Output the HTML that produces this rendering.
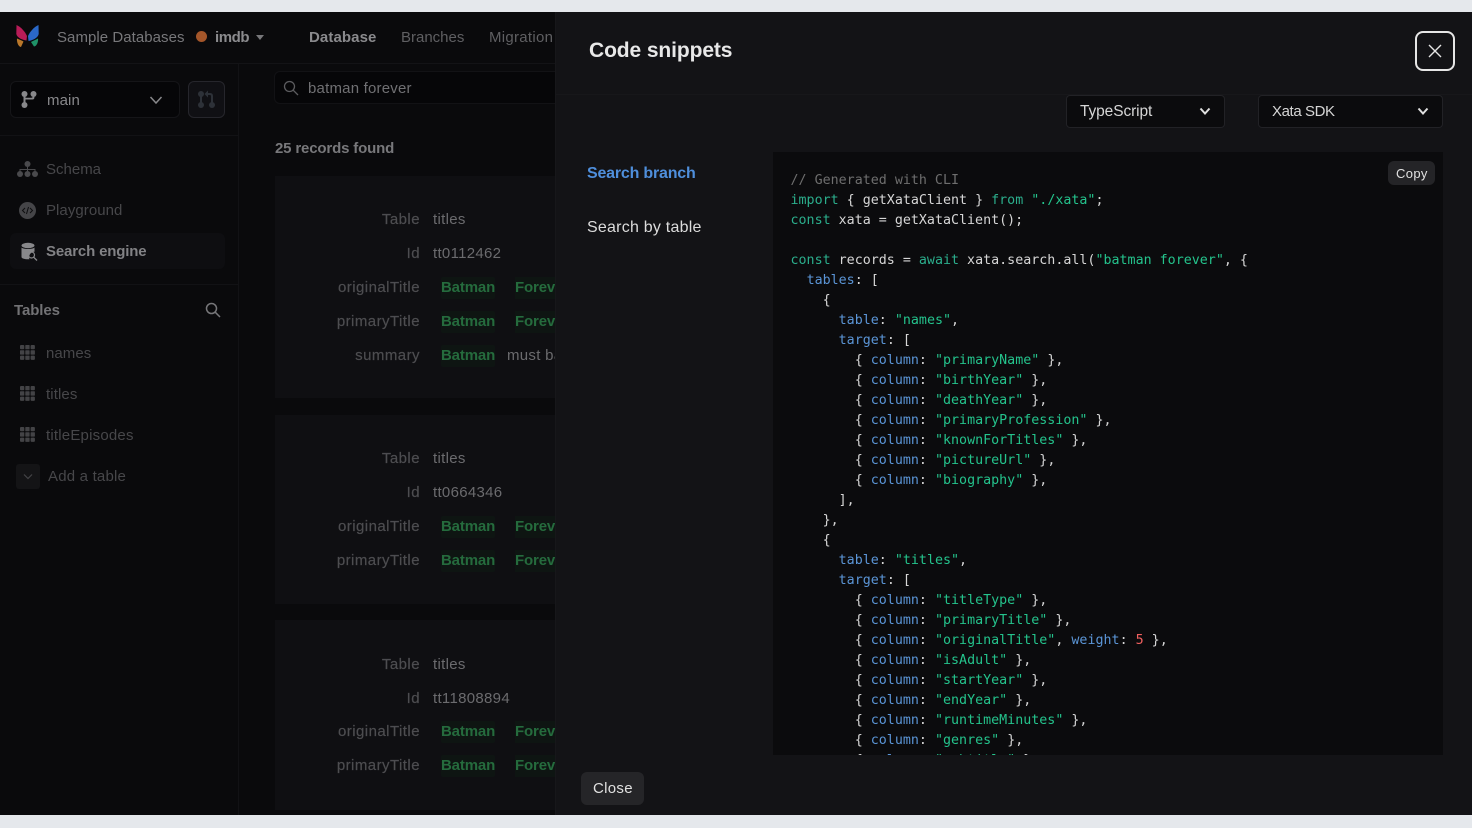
<!DOCTYPE html>
<html><head><meta charset="utf-8"><style>
*{box-sizing:border-box}
html,body{margin:0;padding:0;width:1472px;height:828px;overflow:hidden;background:#e5e8ec;font-family:"Liberation Sans",sans-serif}
.a{position:absolute;white-space:nowrap}
.t{position:absolute;white-space:nowrap;line-height:20px;font-size:15px;letter-spacing:.2px;margin-top:1px}
.l{position:absolute;white-space:nowrap;line-height:20px;font-size:15px;letter-spacing:.45px;right:1052px;color:#4d4d50;font-weight:500;text-align:right;margin-top:1px;-webkit-text-stroke:.2px #4d4d50}
.v{position:absolute;left:433px;white-space:nowrap;line-height:20px;font-size:15px;letter-spacing:.3px;color:#6b6b6e;margin-top:1px}
.h{position:absolute;white-space:nowrap;height:22px;line-height:22px;font-size:15px;letter-spacing:-.15px;font-weight:bold;color:#256b3d;background:#0e1512;width:54px;border-radius:2px;margin-top:1px}
.h2{position:absolute;white-space:nowrap;height:22px;line-height:22px;font-size:15px;letter-spacing:-.15px;font-weight:bold;color:#256b3d;background:#0e1512;padding:0;width:60px;margin-top:1px}
.card{position:absolute;left:275px;width:290px;background:#0f0f12}
pre{margin:0;font-family:"DejaVu Sans Mono","Liberation Mono",monospace;font-size:13.33px;line-height:20px;color:#d6d6d6;white-space:pre}
.k{color:#2bae8c}.s{color:#24c38c}.p{color:#5b95d6}.c{color:#6e6e6e}.n{color:#f0605f}
</style></head><body>
<div class="a" style="left:0;top:12px;width:1472px;height:803px;background:#0a0a0c;overflow:hidden"></div>

<!-- top bar -->
<svg class="a" style="left:15px;top:24px" width="25" height="25" viewBox="0 0 25 25">
<path d="M1.500 1C6 3 10 7.500 12 12L11.500 16.500C8 16 2 14 1.300 10Z" fill="#b81c58"/>
<path d="M23.500 1C19 3 15 7.500 13 12L13.500 17C17 16.500 23 14 23.700 10Z" fill="#2a68c8"/>
<path d="M2 14.500C4 15.500 7 16.500 8.500 17.500L6 23C3.500 23 1.500 18 2 14.500Z" fill="#b9772a"/>
<path d="M23 14.500C21 15.500 18 17 16 18L19 22.500C21.500 22.500 23.500 18 23 14.500Z" fill="#1f9268"/>
</svg>
<div class="t" style="left:57px;top:27px;color:#77777a;letter-spacing:.05px">Sample Databases</div>
<div class="a" style="left:196px;top:31px;width:11px;height:11px;border-radius:50%;background:#a4562a"></div>
<div class="t" style="left:215px;top:27px;color:#8b8b8e;font-weight:bold;letter-spacing:-.45px">imdb</div>
<div class="a" style="left:256px;top:35px;width:0;height:0;border-left:4px solid transparent;border-right:4px solid transparent;border-top:5px solid #77777a"></div>
<div class="t" style="left:309px;top:27px;color:#8a8a8d;font-weight:bold;letter-spacing:.1px">Database</div>
<div class="t" style="left:401px;top:27px;color:#5f5f62;letter-spacing:0">Branches</div>
<div class="t" style="left:489px;top:27px;color:#5f5f62;letter-spacing:.28px">Migration</div>
<div class="a" style="left:0;top:63px;width:556px;height:1px;background:#131316"></div>

<!-- sidebar -->
<div class="a" style="left:238px;top:64px;width:1px;height:751px;background:#121215"></div>
<div class="a" style="left:0;top:135px;width:238px;height:1px;background:#121215"></div>
<div class="a" style="left:0;top:284px;width:238px;height:1px;background:#121215"></div>
<div class="a" style="left:10px;top:81px;width:170px;height:37px;border-radius:6px;background:#060608;border:1px solid #151518"></div>
<svg class="a" style="left:20px;top:90px" width="18" height="19" viewBox="0 0 18 19" fill="#88888b"><circle cx="4.500" cy="4" r="3"/><circle cx="13.500" cy="4" r="3"/><circle cx="4.500" cy="15" r="3"/><path d="M3.500 4h2v11h-2z"/><path d="M12.600 4h1.800v3.500q0 2-2 2H5v-1.800h6.500q1.100 0 1.100-1z"/></svg>
<div class="t" style="left:47px;top:90px;color:#88888b;letter-spacing:.1px">main</div>
<svg class="a" style="left:149px;top:95px" width="14" height="10" viewBox="0 0 14 10" fill="none" stroke="#88888b" stroke-width="1.500"><path d="M1.500 2L7 8l5.500-6"/></svg>
<div class="a" style="left:188px;top:81px;width:37px;height:37px;border-radius:6px;background:#101014;border:1px solid #26262c"></div>
<svg class="a" style="left:197px;top:90px" width="19" height="19" viewBox="0 0 19 19" fill="#2d3138"><circle cx="4" cy="4" r="3"/><circle cx="4" cy="15" r="3"/><circle cx="15" cy="15" r="3"/><path d="M3 4h2v11H3z"/><path d="M14 8h2v7h-2zM9 3h4q3 0 3 3v3h-2V6q0-1-1-1H9z"/><path d="M11 .5v7L7.500 4z"/></svg>

<svg class="a" style="left:17px;top:160px" width="21" height="18" viewBox="0 0 21 18" fill="#4a4a4d"><circle cx="10.500" cy="4" r="3"/><circle cx="3" cy="14" r="3"/><circle cx="10.500" cy="14" r="3"/><circle cx="18" cy="14" r="3"/><path d="M10 6h1v3h7.500v3h-1v-2H11v2h-1v-2H3.500v2h-1V9H10z"/></svg>
<div class="t" style="left:46px;top:159px;color:#47474a;letter-spacing:0">Schema</div>
<div class="a" style="left:19px;top:202px;width:17px;height:17px;border-radius:50%;background:#454548"></div>
<svg class="a" style="left:19px;top:202px" width="17" height="17" viewBox="0 0 17 17" fill="none" stroke="#0e0e10" stroke-width="1"><path d="M6 6L3.500 8.500 6 11M11 6l2.500 2.500L11 11M9.500 5l-2 7"/></svg>
<div class="t" style="left:46px;top:200px;color:#47474a;letter-spacing:.05px">Playground</div>
<div class="a" style="left:10px;top:233px;width:215px;height:36px;border-radius:6px;background:#0e0e11"></div>
<svg class="a" style="left:20px;top:242px" width="18" height="20" viewBox="0 0 18 20"><ellipse cx="8" cy="3.500" rx="6.500" ry="2.700" fill="#88888b"/><path d="M1.500 5.500C3 7.500 13 7.500 14.500 5.500v4.200a5.500 5.500 0 0 0-5 7.500c-4 .4-8-.6-8-2.200z" fill="#88888b"/><circle cx="11.500" cy="13" r="3" fill="none" stroke="#88888b" stroke-width="1.200"/><path d="M13.800 15.300L17 18.500" stroke="#88888b" stroke-width="1.300"/></svg>
<div class="t" style="left:46px;top:241px;color:#828285;font-weight:bold;letter-spacing:-.16px">Search engine</div>
<div class="t" style="left:14px;top:300px;color:#727275;font-weight:bold;letter-spacing:-.1px">Tables</div>
<svg class="a" style="left:204px;top:301px" width="18" height="18" viewBox="0 0 18 18" fill="none" stroke="#77777a" stroke-width="1.500"><circle cx="7.500" cy="7.500" r="5"/><path d="M11.200 11.200L16 16"/></svg>

<svg width="0" height="0" style="position:absolute"><defs><g id="g" fill="#434346"><rect x="0" y="0" width="4.300" height="4.300" rx="1"/><rect x="5.300" y="0" width="4.300" height="4.300" rx=".6"/><rect x="10.600" y="0" width="4.300" height="4.300" rx="1"/><rect x="0" y="5.300" width="4.300" height="4.300" rx=".6"/><rect x="5.300" y="5.300" width="4.300" height="4.300" rx=".6"/><rect x="10.600" y="5.300" width="4.300" height="4.300" rx=".6"/><rect x="0" y="10.600" width="4.300" height="4.300" rx="1"/><rect x="5.300" y="10.600" width="4.300" height="4.300" rx=".6"/><rect x="10.600" y="10.600" width="4.300" height="4.300" rx="1"/></g></defs></svg>
<svg class="a" style="left:20px;top:345px" width="15" height="15"><use href="#g"/></svg>
<div class="t" style="left:46px;top:343px;color:#47474a;letter-spacing:.05px">names</div>
<svg class="a" style="left:20px;top:386px" width="15" height="15"><use href="#g"/></svg>
<div class="t" style="left:46px;top:384px;color:#47474a;letter-spacing:.1px">titles</div>
<svg class="a" style="left:20px;top:427px" width="15" height="15"><use href="#g"/></svg>
<div class="t" style="left:46px;top:425px;color:#47474a;letter-spacing:.2px">titleEpisodes</div>
<div class="a" style="left:16px;top:464px;width:24px;height:25px;border-radius:3px;background:#141416"></div>
<svg class="a" style="left:22px;top:473px" width="12" height="8" viewBox="0 0 12 8" fill="none" stroke="#444447" stroke-width="1.200"><path d="M2 1.500L6 5.500l4-4"/></svg>
<div class="t" style="left:48px;top:466px;color:#47474a;letter-spacing:.2px">Add a table</div>

<!-- main -->
<div class="a" style="left:274px;top:71px;width:290px;height:33px;border-radius:6px;background:#060608;border:1px solid #121215"></div>
<svg class="a" style="left:283px;top:80px" width="16" height="16" viewBox="0 0 16 16" fill="none" stroke="#5c5c5f" stroke-width="1.300"><circle cx="6.500" cy="6.500" r="5"/><path d="M10.200 10.200L15 15"/></svg>
<div class="t" style="left:308px;top:78px;color:#707073;letter-spacing:.2px">batman forever</div>
<div class="t" style="left:275px;top:138px;color:#78787b;font-weight:bold;letter-spacing:-.16px">25 records found</div>

<div class="card" style="top:176px;height:222px"></div>
<div class="card" style="top:415px;height:189px"></div>
<div class="card" style="top:620px;height:190px"></div>

<div class="l" style="top:209px">Table</div><div class="v" style="top:209px">titles</div>
<div class="l" style="top:243px">Id</div><div class="v" style="top:243px">tt0112462</div>
<div class="l" style="top:277px">originalTitle</div><div class="h" style="left:441px;top:276px">Batman</div><div class="h2" style="left:515px;top:276px">Forever</div>
<div class="l" style="top:311px">primaryTitle</div><div class="h" style="left:441px;top:310px">Batman</div><div class="h2" style="left:515px;top:310px">Forever</div>
<div class="l" style="top:345px">summary</div><div class="h" style="left:441px;top:344px">Batman</div><div class="v" style="left:507px;top:345px">must battle</div>

<div class="l" style="top:448px">Table</div><div class="v" style="top:448px">titles</div>
<div class="l" style="top:482px">Id</div><div class="v" style="top:482px">tt0664346</div>
<div class="l" style="top:516px">originalTitle</div><div class="h" style="left:441px;top:515px">Batman</div><div class="h2" style="left:515px;top:515px">Forever</div>
<div class="l" style="top:550px">primaryTitle</div><div class="h" style="left:441px;top:549px">Batman</div><div class="h2" style="left:515px;top:549px">Forever</div>

<div class="l" style="top:654px">Table</div><div class="v" style="top:654px">titles</div>
<div class="l" style="top:688px">Id</div><div class="v" style="top:688px">tt11808894</div>
<div class="l" style="top:721px">originalTitle</div><div class="h" style="left:441px;top:720px">Batman</div><div class="h2" style="left:515px;top:720px">Forever</div>
<div class="l" style="top:755px">primaryTitle</div><div class="h" style="left:441px;top:754px">Batman</div><div class="h2" style="left:515px;top:754px">Forever</div>

<!-- modal -->
<div class="a" style="left:556px;top:12px;width:916px;height:803px;background:#131316;box-shadow:-1px 0 0 #17171a"></div>
<div class="a" style="left:556px;top:94px;width:916px;height:1px;background:#17171a"></div>
<div class="t" style="left:589px;top:37px;line-height:26px;font-size:21px;font-weight:bold;color:#e8e8e8;letter-spacing:-.1px">Code snippets</div>
<div class="a" style="left:1415px;top:31px;width:40px;height:40px;border-radius:8px;border:2px solid #e6e6e6"></div>
<svg class="a" style="left:1427px;top:43px" width="16" height="16" viewBox="0 0 16 16" fill="none" stroke="#e6e6e6" stroke-width="1.400"><path d="M2 2l12 12M14 2L2 14"/></svg>

<div class="a" style="left:1066px;top:95px;width:159px;height:33px;border-radius:4px;background:#0b0b0d;border:1px solid #222226"></div>
<div class="t" style="left:1080px;top:101px;color:#d6d6d6;font-size:15.500px;letter-spacing:-.1px">TypeScript</div>
<svg class="a" style="left:1199px;top:107px" width="12" height="9" viewBox="0 0 12 9" fill="none" stroke="#e0e0e0" stroke-width="2"><path d="M1.500 1.500L6 6.500l4.500-5"/></svg>
<div class="a" style="left:1258px;top:95px;width:185px;height:33px;border-radius:4px;background:#0b0b0d;border:1px solid #222226"></div>
<div class="t" style="left:1272px;top:101px;color:#d6d6d6;font-size:15px;letter-spacing:-.4px">Xata SDK</div>
<svg class="a" style="left:1417px;top:107px" width="12" height="9" viewBox="0 0 12 9" fill="none" stroke="#e0e0e0" stroke-width="2"><path d="M1.500 1.500L6 6.500l4.500-5"/></svg>

<div class="t" style="left:587px;top:163px;color:#4f8fdc;font-size:16px;font-weight:bold;letter-spacing:-.2px">Search branch</div>
<div class="t" style="left:587px;top:217px;color:#dcdcdc;font-size:16px;letter-spacing:.23px">Search by table</div>

<div class="a" style="left:773px;top:152px;width:670px;height:603px;background:#0b0b0d;overflow:hidden">
<pre class="a" style="left:17.500px;top:19px;white-space:pre"><span class="c">// Generated with CLI</span>
<span class="k">import</span> { getXataClient } <span class="k">from</span> <span class="s">"./xata"</span>;
<span class="k">const</span> xata = getXataClient();

<span class="k">const</span> records = <span class="k">await</span> xata.search.all(<span class="s">"batman forever"</span>, {
  <span class="p">tables</span>: [
    {
      <span class="p">table</span>: <span class="s">"names"</span>,
      <span class="p">target</span>: [
        { <span class="p">column</span>: <span class="s">"primaryName"</span> },
        { <span class="p">column</span>: <span class="s">"birthYear"</span> },
        { <span class="p">column</span>: <span class="s">"deathYear"</span> },
        { <span class="p">column</span>: <span class="s">"primaryProfession"</span> },
        { <span class="p">column</span>: <span class="s">"knownForTitles"</span> },
        { <span class="p">column</span>: <span class="s">"pictureUrl"</span> },
        { <span class="p">column</span>: <span class="s">"biography"</span> },
      ],
    },
    {
      <span class="p">table</span>: <span class="s">"titles"</span>,
      <span class="p">target</span>: [
        { <span class="p">column</span>: <span class="s">"titleType"</span> },
        { <span class="p">column</span>: <span class="s">"primaryTitle"</span> },
        { <span class="p">column</span>: <span class="s">"originalTitle"</span>, <span class="p">weight</span>: <span class="n">5</span> },
        { <span class="p">column</span>: <span class="s">"isAdult"</span> },
        { <span class="p">column</span>: <span class="s">"startYear"</span> },
        { <span class="p">column</span>: <span class="s">"endYear"</span> },
        { <span class="p">column</span>: <span class="s">"runtimeMinutes"</span> },
        { <span class="p">column</span>: <span class="s">"genres"</span> },
        { <span class="p">column</span>: <span class="s">"subtitle"</span> },
</pre>
</div>
<div class="a" style="left:1388px;top:161px;width:47px;height:24px;border-radius:6px;background:#242427"></div>
<div class="t" style="left:1396px;top:163px;font-size:13px;color:#e0e0e0;letter-spacing:.35px">Copy</div>
<div class="a" style="left:581px;top:772px;width:63px;height:33px;border-radius:6px;background:#252528"></div>
<div class="t" style="left:593px;top:778px;color:#e0e0e0;letter-spacing:.3px">Close</div>
</body></html>
